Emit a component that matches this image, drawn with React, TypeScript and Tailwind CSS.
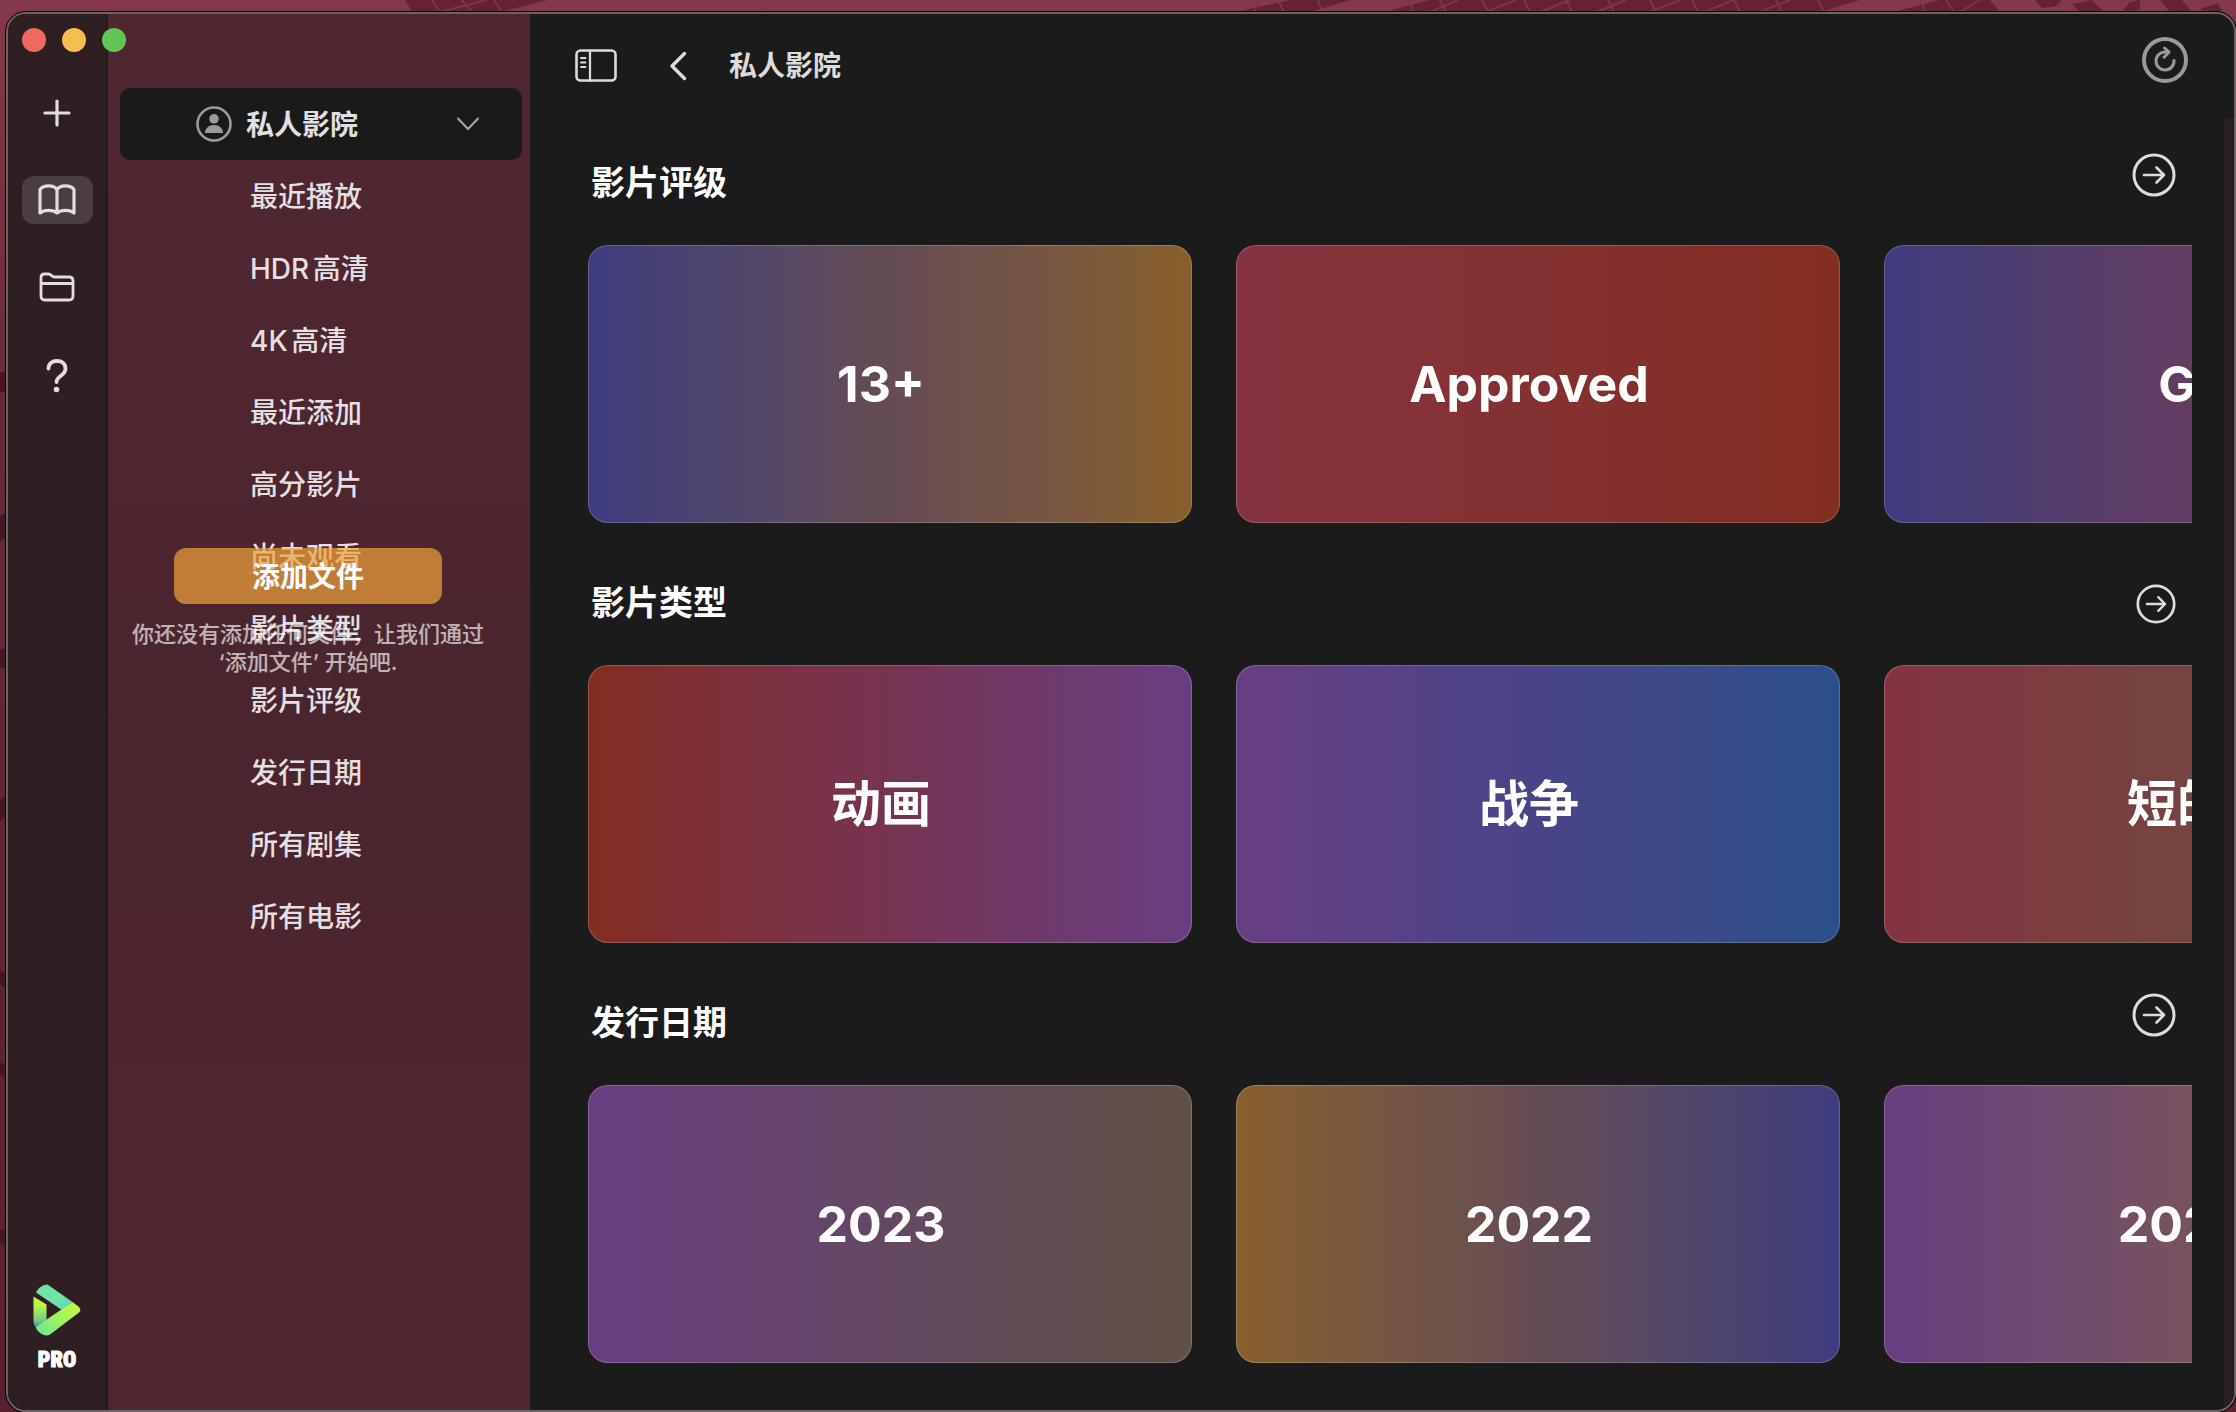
import type { ReactNode } from 'react';

type Card = { label: string; tone: string };
type Row = { title: string; smallArrow?: boolean; cards: Card[] };

const MENU = [
  '最近播放',
  'HDR高清',
  '4K高清',
  '最近添加',
  '高分影片',
  '尚未观看',
  '影片类型',
  '影片评级',
  '发行日期',
  '所有剧集',
  '所有电影',
];

const ROWS: Row[] = [
  {
    title: '影片评级',
    cards: [
      { label: '13+', tone: 'from-[#3e3c7e] via-[#654c53] to-[#885f2a]' },
      { label: 'Approved', tone: 'from-[#84333f] via-[#833131] to-[#832d21]' },
      { label: 'G', tone: 'from-[#3e3c7e] to-[#84333f]' },
    ],
  },
  {
    title: '影片类型',
    smallArrow: true,
    cards: [
      { label: '动画', tone: 'from-[#832d21] via-[#763352] to-[#683e82]' },
      { label: '战争', tone: 'from-[#683e82] via-[#484487] to-[#2a4f88]' },
      { label: '短的', tone: 'from-[#84333f] to-[#605145]' },
    ],
  },
  {
    title: '发行日期',
    cards: [
      { label: '2023', tone: 'from-[#683e82] via-[#644862] to-[#605145]' },
      { label: '2022', tone: 'from-[#885f2a] via-[#654c53] to-[#3e3c7e]' },
      { label: '2021', tone: 'from-[#683e82] to-[#885f2a]' },
    ],
  },
];

// tiled wallpaper that shows around the window's top and left edges
function Wallpaper() {
  return (
    <svg className="absolute top-0 left-0" width="2236" height="1412" aria-hidden="true">
      <g fill="#652233">
        <path d="M405 0H548L500 12H412zM1290 0H1350L1310 12H1236zM1430 0H1860L1820 12H1385zM1940 0H1990L2000 12H1894z" />
        <path d="M2035 0H2062L2056 6L2042 8zM2072 4L2092 0L2104 12H2080zM2130 2L2140 0V10L2122 12zM2160 0H2182L2192 12H2170zM2200 9L2218 3L2222 12H2204z" />
      </g>
      <path
        d="M432 0l8 12M462 0l10 12M494 0l8 12M440 12l46-12M1260 0l-6 12M1278 0l6 12M1318 0l4 12M1408 0l6 12M1440 0l6 12M1482 0l6 12M1524 0l6 12M1566 0l6 12M1608 0l6 12M1650 0l6 12M1692 0l6 12M1734 0l6 12M1776 0l6 12M1818 0l6 12M1920 0l6 12M1946 0l8 12M1430 12l28-12M1486 12l30-12M1540 12l30-12M1596 12l30-12M1650 12l30-12M1704 12l30-12M1760 12l30-12M1960 12l20-12"
        stroke="#7d3648"
        strokeWidth="2"
      />
      <path
        d="M0 373l6-2v20l-6 2zM0 516l6-3v25l-6 3zM0 650l6-2v19l-6 2zM0 800l6-4v20l-6 5zM0 970l6 4v14l-6-4zM0 1062l6 3v14l-6-4zM0 1229l6 2v15l-6-2z"
        fill="#481623"
      />
    </svg>
  );
}

function RailButton({ label, active, children }: { label: string; active?: boolean; children: ReactNode }) {
  return (
    <button
      aria-label={label}
      className={`flex h-12 w-[71px] items-center justify-center rounded-xl text-[#e2dede] ${active ? 'bg-[#4a3e40]' : ''}`}
    >
      {children}
    </button>
  );
}

function Rail() {
  return (
    <nav className="flex w-[100px] shrink-0 flex-col items-center border-r-2 border-[#1d1a1b] bg-[#2f1f22] pt-[75px] pb-[34px]">
      <div className="flex flex-col gap-[39px]">
        <RailButton label="添加">
          <svg width="28" height="28" viewBox="0 0 28 28" fill="none" stroke="currentColor" strokeWidth="3.2" strokeLinecap="round">
            <path d="M14 2v24M2 14h24" />
          </svg>
        </RailButton>
        <RailButton label="资料库" active>
          <svg width="38" height="32" viewBox="0 0 38 32" fill="none" stroke="currentColor" strokeWidth="3.2" strokeLinejoin="round" strokeLinecap="round">
            <path d="M19 5.500C16 1 6 .5 2 5.500V29c4-3.600 13-3.600 17 0 4-3.600 13-3.600 17 0V5.500C32 .5 22 1 19 5.500zM19 5.500V29" />
          </svg>
        </RailButton>
        <RailButton label="文件夹">
          <svg width="36" height="30" viewBox="0 0 36 30" fill="none" stroke="currentColor" strokeWidth="2.8" strokeLinejoin="round">
            <path d="M2 5.500c0-2.500 1-3.500 3.500-3.500h4c3 0 3 3 6 3H30c2.800 0 4 1.200 4 4v15c0 2.800-1.200 4-4 4H6c-2.800 0-4-1.200-4-4zM2 11.500h32" />
          </svg>
        </RailButton>
        <RailButton label="帮助">
          <svg width="22" height="40" viewBox="0 -5 22 40" fill="none" stroke="currentColor" strokeWidth="3.8" strokeLinecap="round">
            <path d="M2.500 9.500C2.500 4.500 6 2 11 2s8.500 2.800 8.500 7.500c0 3.500-1.800 5.200-4.500 7.200S10.500 20 10.500 23" />
            <circle cx="10.500" cy="30.500" r="2.800" fill="currentColor" stroke="none" />
          </svg>
        </RailButton>
      </div>
      <div className="mt-auto flex flex-col items-center gap-2">
        <svg width="48" height="52" viewBox="0 0 48 52">
          <defs>
            <linearGradient id="top" x1="0" y1="0" x2="1" y2="1">
              <stop offset="0.600" stopColor="#6ee5a6" />
              <stop offset="0.850" stopColor="#62d3c4" />
              <stop offset="1" stopColor="#3f8fe0" />
            </linearGradient>
            <linearGradient id="left" x1="0" y1="0" x2="0" y2="1">
              <stop offset="0.300" stopColor="#b9f646" />
              <stop offset="0.800" stopColor="#74c98a" />
              <stop offset="1" stopColor="#3c7fd0" />
            </linearGradient>
            <linearGradient id="bottom" x1="1" y1="0" x2="0" y2="1">
              <stop offset="0" stopColor="#c8fb3c" />
              <stop offset="0.500" stopColor="#a0f25e" />
              <stop offset="1" stopColor="#66e79a" />
            </linearGradient>
          </defs>
          <path d="M3 8.500C5.500 3.500 10 .5 14.500 .5L39.500 18 29 26z" fill="url(#top)" />
          <path d="M.5 12.500L13.500 20.500V36L2.500 43C1 41 .5 39 .5 36z" fill="url(#left)" />
          <path d="M39.500 18L46 23c2 2 1.500 4 0 5.500L17 50.500c-5 3-12-1.500-14.500-7.500z" fill="url(#bottom)" />
        </svg>
        <span className="font-['Impact','Roboto_Condensed','Roboto',sans-serif] text-[22px] leading-8 font-black text-white [-webkit-text-stroke:1px_white]">PRO</span>
      </div>
    </nav>
  );
}

function EmptyState() {
  return (
    <div className="absolute top-[534px] left-0 flex w-[400px] flex-col items-center">
      <button className="h-14 w-[268px] rounded-xl bg-[#f1a23b]/70 pt-px text-[28px] font-semibold text-white">添加文件</button>
      <p className="mt-4 text-center text-[22px] leading-7 font-medium text-white/65">
        你还没有添加任何文件，让我们通过
        <br />
        ‘添加文件’ 开始吧.
      </p>
    </div>
  );
}

function Sidebar() {
  return (
    <aside className="relative w-[422px] shrink-0 bg-linear-to-b from-[#502731] via-[#4b252e] to-[#4e2630] px-3 pt-[74px]">
      <div className="relative -mr-1 flex items-center">
        <label htmlFor="library" className="sr-only">媒体库</label>
        <select id="library" className="h-[72px] w-full appearance-none rounded-[10px] bg-[#1a1a1a] pt-px pl-[126px] text-[28px] font-semibold text-[#e0e0e0]">
          <option>私人影院</option>
        </select>
        <svg className="pointer-events-none absolute left-[76px]" width="36" height="36" viewBox="0 0 36 36">
          <circle cx="18" cy="18" r="16.500" fill="none" stroke="#9b9b9b" strokeWidth="2.600" />
          <circle cx="18" cy="12.800" r="4.800" fill="#9b9b9b" />
          <path d="M9 27c0-4.500 4-8 9-8s9 3.500 9 8z" fill="#9b9b9b" />
        </svg>
        <svg className="pointer-events-none absolute right-[42px]" width="24" height="16" viewBox="0 0 24 16" fill="none" stroke="#a8a8a8" strokeWidth="2" strokeLinecap="round">
          <path d="M2 2.500l10 10.500L22 2.500" />
        </svg>
      </div>
      <ul className="pt-px">
        {MENU.map((item) => (
          <li key={item}>
            <a href="#" className="flex h-[72px] items-center pl-[130px] text-[28px] font-medium text-[#e4dfe0]">{item}</a>
          </li>
        ))}
      </ul>
      <EmptyState />
    </aside>
  );
}

function ArrowButton({ label, small }: { label: string; small?: boolean }) {
  return (
    <button aria-label={label} className={small ? 'size-10 self-end' : 'size-11 self-start'}>
      <svg className="size-full" viewBox="0 0 44 44" fill="none" stroke="#dcdcdc" strokeWidth="3" strokeLinecap="round" strokeLinejoin="round">
        <circle cx="22" cy="22" r="20" />
        <path d="M12 22h20M24.500 14.500L32 22l-7.500 7.500" strokeWidth="2.600" />
      </svg>
    </button>
  );
}

function Toolbar() {
  return (
    <header className="flex h-[104px] shrink-0 items-center pr-[46px] pl-[45px]">
      <button aria-label="切换边栏">
        <svg width="42" height="34" viewBox="0 0 42 34" fill="none" stroke="#dcdcdc" strokeWidth="2.600" strokeLinecap="round">
          <rect x="1.500" y="1.500" width="39" height="30" rx="4" />
          <path d="M15 2v30" strokeWidth="2.200" />
          <path d="M6 9h4.500M6 13.500h4.500M6 18h4.500" strokeWidth="1.800" />
        </svg>
      </button>
      <button aria-label="返回" className="ml-[52px]">
        <svg width="18" height="30" viewBox="0 0 18 30" fill="none" stroke="#dcdcdc" strokeWidth="3.400" strokeLinecap="round" strokeLinejoin="round">
          <path d="M15.500 2.500L3 15l12.500 12.500" />
        </svg>
      </button>
      <h1 className="ml-[42px] text-[28px] font-semibold text-[#dcdcdc]">私人影院</h1>
      <button aria-label="刷新" className="mb-3 ml-auto">
        <svg width="46" height="46" viewBox="0 0 46 46" fill="none" stroke="#999" strokeLinecap="round" strokeLinejoin="round">
          <circle cx="23" cy="23" r="21" strokeWidth="4" />
          <path d="M32 23.500a9 9 0 1 1-8.500-8.500h3" strokeWidth="3" />
          <path d="M22.500 11l4.500 4.200-5 5" strokeWidth="3" />
        </svg>
      </button>
    </header>
  );
}

function Shelf({ row }: { row: Row }) {
  return (
    <section>
      <div className="flex h-[51px] justify-between pr-4 pl-[3px]">
        <h2 className="self-end text-[34px] leading-[43px] font-semibold text-white">{row.title}</h2>
        <ArrowButton label={`查看全部${row.title}`} small={row.smallArrow} />
      </div>
      <div className="mt-[41px] flex gap-11 overflow-hidden">
        {row.cards.map((card) => (
          <a
            key={card.label}
            href="#"
            className={`flex h-[278px] w-[604px] shrink-0 items-center justify-center rounded-[20px] bg-linear-to-r pr-[18px] text-[50px] font-bold text-white inset-ring inset-ring-white/20 ${card.tone}`}
          >
            {card.label}
          </a>
        ))}
      </div>
    </section>
  );
}

export default function App() {
  return (
    <div className="relative h-screen overflow-hidden bg-linear-to-b from-[#84394b] via-[#66293a] via-30% to-[#58202f] pt-3 pl-1.5 font-['Inter','Noto_Sans_CJK_SC',sans-serif] [text-autospace:normal]">
      <Wallpaper />
      <div className="relative flex h-full overflow-hidden rounded-[20px] border-2 border-[#6b6264] bg-[#1b1b1b] ring-1 ring-black">
        <Rail />
        <Sidebar />
        <main className="flex min-w-0 grow flex-col">
          <Toolbar />
          <div className="flex min-h-0 grow">
            <div className="flex min-w-0 grow flex-col gap-[50px] pt-[35px] pr-8 pl-[58px]">
              {ROWS.map((row) => (
                <Shelf key={row.title} row={row} />
              ))}
            </div>
            <div className="w-2.5 shrink-0 bg-[#2a2023]" />
          </div>
        </main>
        <div className="absolute top-3.5 left-3.5 flex gap-4">
          <button aria-label="关闭" className="size-6 rounded-full bg-[#ed6a5f]" />
          <button aria-label="最小化" className="size-6 rounded-full bg-[#f5bf4f]" />
          <button aria-label="缩放" className="size-6 rounded-full bg-[#62c554]" />
        </div>
      </div>
    </div>
  );
}
